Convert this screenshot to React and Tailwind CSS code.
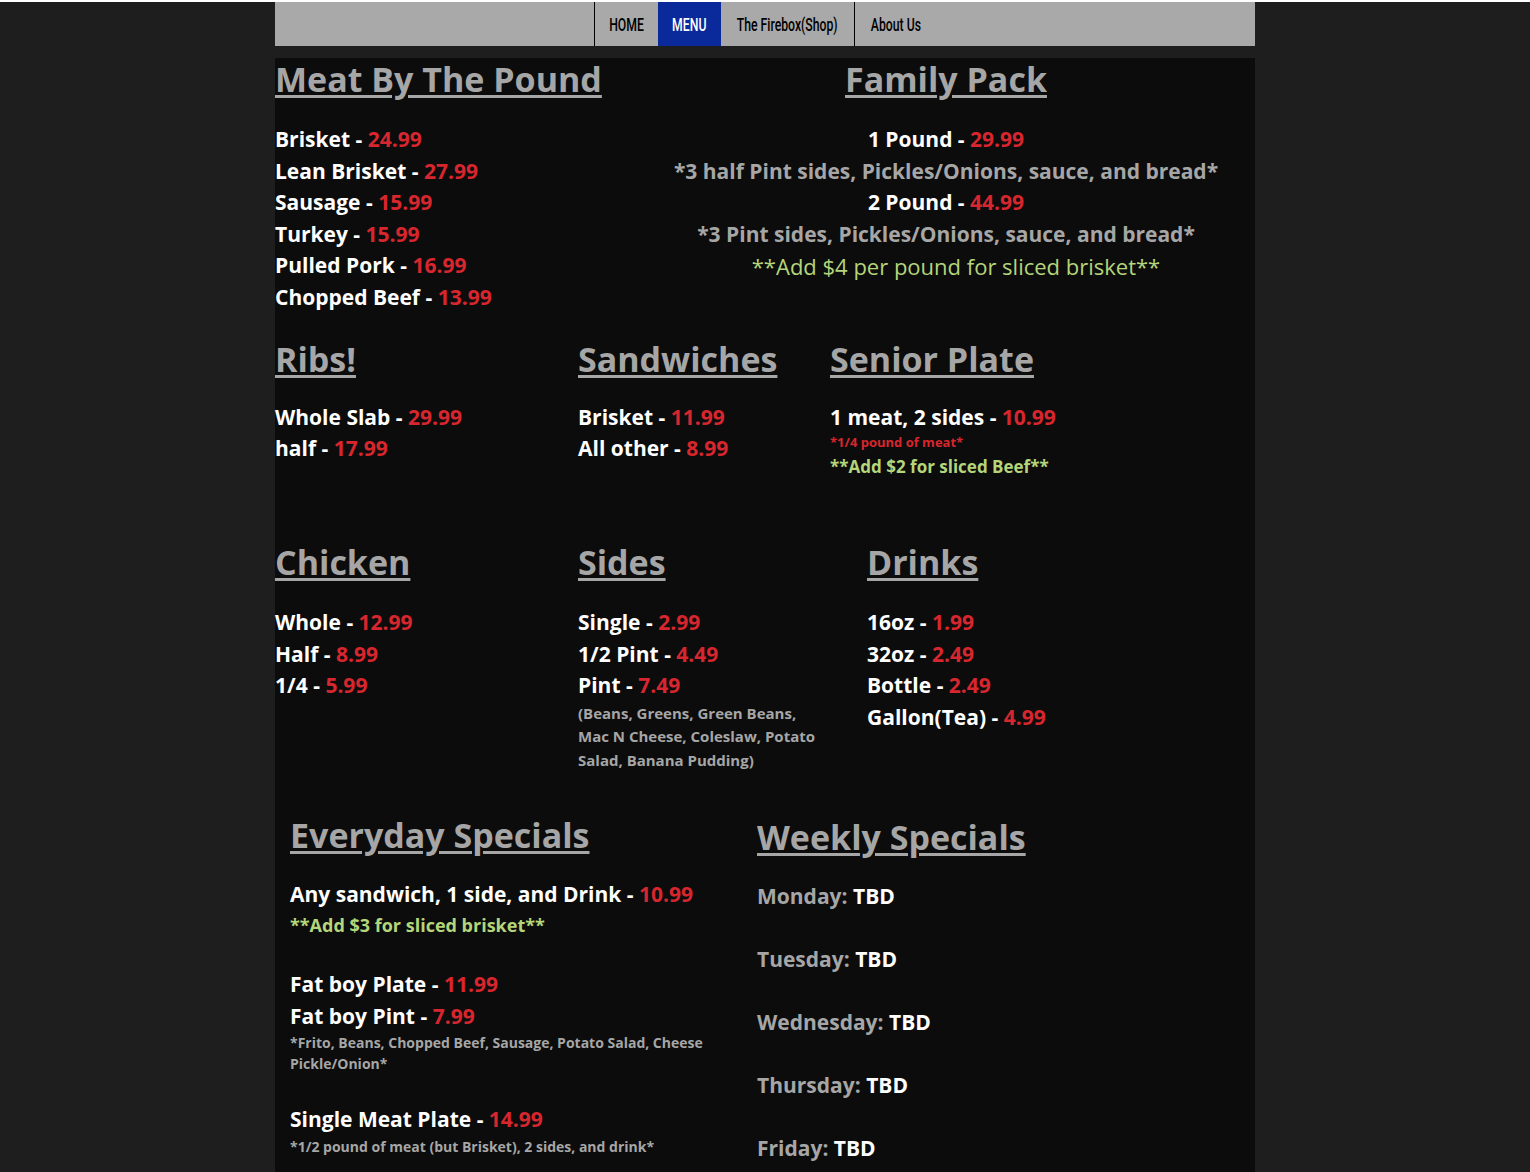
import React from "react";

const RED = "text-[#d8262e]";
const GREEN = "text-[#b5d57a]";

const Heading = ({ children }) => (
  <h2 className="text-[34px] leading-[42px] font-bold text-[#a6a6a6] underline underline-offset-[3px] decoration-[3px]">
    {children}
  </h2>
);

const Item = ({ name, price }) => (
  <p className="text-[21px] leading-[31.6px] font-bold text-white whitespace-nowrap">
    {name} - <span className={RED}>{price}</span>
  </p>
);

const Note = ({ children, small }) => (
  <p className={`font-bold text-[#a6a6a6] ${small ? "text-[14px] leading-[21px]" : "w-[250px] text-[15px] leading-[23.5px]"}`}>
    {children}
  </p>
);

const NavBar = () => {
  const links = [
    { label: "HOME", w: "w-[63px]" },
    { label: "MENU", w: "w-[63px]" },
    { label: "The Firebox(Shop)", w: "w-[134px]" },
    { label: "About Us", w: "w-[81px]" },
  ];
  return (
    <nav className="mx-auto mt-[2px] flex h-[44px] w-[980px] bg-[#a9a9a9] pl-[319px]">
      <div className="flex border-l border-black">
        {links.map((l, i) => (
          <a
            key={l.label}
            className={`flex items-center justify-center ${l.w} ${
              l.label === "MENU" ? "bg-[#0a2a9c] text-white" : "text-black"
            } ${i === 2 ? "border-r border-black" : ""}`}
          >
            <span className="inline-block scale-x-[0.68] whitespace-nowrap font-['Roboto',sans-serif] text-[18px] font-medium">
              {l.label}
            </span>
          </a>
        ))}
      </div>
    </nav>
  );
};

export default function App() {
  return (
    <div className="min-h-[1172px] bg-[#1f1e1e] font-['Open_Sans',sans-serif]">
      <NavBar />

      <main className="mx-auto mt-[12px] w-[980px] bg-[#0c0c0c] pb-10">
        {/* Row 1 */}
        <section className="flex">
          <div className="w-[362px]">
            <Heading>Meat By The Pound</Heading>
            <div className="mt-[24px]">
              <Item name="Brisket" price="24.99" />
              <Item name="Lean Brisket" price="27.99" />
              <Item name="Sausage" price="15.99" />
              <Item name="Turkey" price="15.99" />
              <Item name="Pulled Pork" price="16.99" />
              <Item name="Chopped Beef" price="13.99" />
            </div>
          </div>
          <div className="flex-1 text-center">
            <Heading>Family Pack</Heading>
            <div className="mt-[24px] text-[21px] leading-[31.6px] font-bold">
              <p className="text-white">1 Pound - <span className={RED}>29.99</span></p>
              <p className="text-[#a6a6a6]">*3 half Pint sides, Pickles/Onions, sauce, and bread*</p>
              <p className="text-white">2 Pound - <span className={RED}>44.99</span></p>
              <p className="text-[#a6a6a6]">*3 Pint sides, Pickles/Onions, sauce, and bread*</p>
              <p className={`pl-5 text-[22px] font-normal ${GREEN} leading-[32px]`}>**Add $4 per pound for sliced brisket**</p>
            </div>
          </div>
        </section>

        {/* Row 2 */}
        <section className="mt-[24px] flex">
          <div className="w-[303px]">
            <Heading>Ribs!</Heading>
            <div className="mt-[22px]">
              <Item name="Whole Slab" price="29.99" />
              <Item name="half" price="17.99" />
            </div>
          </div>
          <div className="w-[252px]">
            <Heading>Sandwiches</Heading>
            <div className="mt-[22px]">
              <Item name="Brisket" price="11.99" />
              <Item name="All other" price="8.99" />
            </div>
          </div>
          <div className="flex-1">
            <Heading>Senior Plate</Heading>
            <div className="mt-[22px]">
              <Item name="1 meat, 2 sides" price="10.99" />
              <p className={`mt-[1px] text-[13px] leading-[17px] font-bold ${RED}`}>*1/4 pound of meat*</p>
              <p className={`text-[17px] leading-[32px] font-bold ${GREEN}`}>**Add $2 for sliced Beef**</p>
            </div>
          </div>
        </section>

        {/* Row 3 */}
        <section className="mt-[58px] flex">
          <div className="w-[303px]">
            <Heading>Chicken</Heading>
            <div className="mt-[24px]">
              <Item name="Whole" price="12.99" />
              <Item name="Half" price="8.99" />
              <Item name="1/4" price="5.99" />
            </div>
          </div>
          <div className="w-[289px]">
            <Heading>Sides</Heading>
            <div className="mt-[24px]">
              <Item name="Single" price="2.99" />
              <Item name="1/2 Pint" price="4.49" />
              <Item name="Pint" price="7.49" />
              <Note>(Beans, Greens, Green Beans, Mac N Cheese, Coleslaw, Potato Salad, Banana Pudding)</Note>
            </div>
          </div>
          <div className="flex-1">
            <Heading>Drinks</Heading>
            <div className="mt-[24px]">
              <Item name="16oz" price="1.99" />
              <Item name="32oz" price="2.49" />
              <Item name="Bottle" price="2.49" />
              <Item name="Gallon(Tea)" price="4.99" />
            </div>
          </div>
        </section>

        {/* Row 4 */}
        <section className="mt-[42px] flex pl-[15px]">
          <div className="w-[467px]">
            <Heading>Everyday Specials</Heading>
            <div className="mt-[23px]">
              <Item name="Any sandwich, 1 side, and Drink" price="10.99" />
              <p className={`text-[18px] leading-[28px] font-bold ${GREEN}`}>**Add $3 for sliced brisket**</p>
              <div className="h-[30px]" />
              <Item name="Fat boy Plate" price="11.99" />
              <Item name="Fat boy Pint" price="7.99" />
              <Note small>*Frito, Beans, Chopped Beef, Sausage, Potato Salad, Cheese Pickle/Onion*</Note>
              <div className="h-[30px]" />
              <Item name="Single Meat Plate" price="14.99" />
              <Note small>*1/2 pound of meat (but Brisket), 2 sides, and drink*</Note>
            </div>
          </div>
          <div className="flex-1 pt-[2px]">
            <Heading>Weekly Specials</Heading>
            <div className="mt-[23px] flex flex-col gap-[31.4px] text-[21px] leading-[31.6px] font-bold">
              {["Monday", "Tuesday", "Wednesday", "Thursday", "Friday"].map((d) => (
                <p key={d} className="text-[#a6a6a6]">
                  {d}: <span className="text-white">TBD</span>
                </p>
              ))}
            </div>
          </div>
        </section>
      </main>
    </div>
  );
}
